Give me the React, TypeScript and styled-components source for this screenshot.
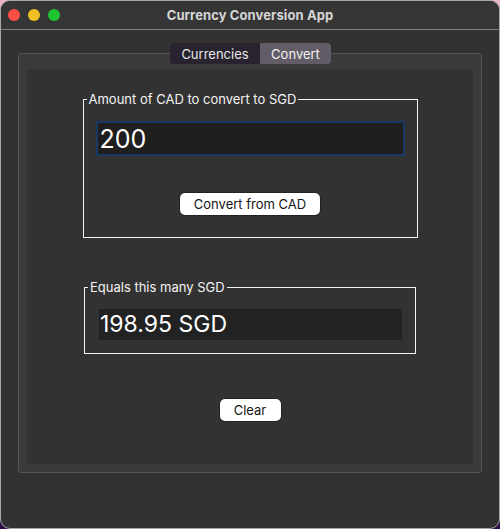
import React from "react";
import styled, { createGlobalStyle } from "styled-components";

const Global = createGlobalStyle`
  html, body {
    margin: 0;
    padding: 0;
    background: linear-gradient(180deg, #e7b7c8 0%, #b07aa8 60%, #2c0b46 100%);
  }
  body {
    font-family: Inter, "Liberation Sans", sans-serif;
  }
`;

const Window = styled.div`
  width: 500px;
  height: 529px;
  box-sizing: border-box;
  border: 1px solid #a8a8a8;
  border-radius: 10px;
  overflow: hidden;
  background: #323232;
  display: flex;
  flex-direction: column;
  font-family: Inter, "Liberation Sans", sans-serif;
`;

const TitleBar = styled.div`
  height: 28px;
  flex: none;
  border-bottom: 1px solid #7c7c7c;
  background: #353535;
  display: grid;
  grid-template-columns: 1fr auto 1fr;
  align-items: center;
  padding-left: 7px;
  padding-right: 7px;
`;

const Lights = styled.div`
  display: flex;
  gap: 8px;
  align-items: center;
`;

const Light = styled.span<{ $color: string }>`
  width: 12px;
  height: 12px;
  border-radius: 50%;
  background: ${(p) => p.$color};
`;

const Title = styled.div`
  font-size: 13px;
  font-weight: 700;
  color: #d6d6d6;
  letter-spacing: 0.1px;
`;

const Content = styled.div`
  padding: 13px 17px 0 17px;
  display: flex;
  flex-direction: column;
  align-items: stretch;
`;

const Tabs = styled.div`
  display: flex;
  justify-content: center;
  position: relative;
  z-index: 1;
  padding-left: 1px;
`;

const Tab = styled.div<{ $active?: boolean; $width: number; $first?: boolean }>`
  width: ${(p) => p.$width}px;
  height: 21px;
  display: flex;
  align-items: center;
  justify-content: center;
  font-size: 13px;
  color: ${(p) => (p.$active ? "#f2f2f2" : "#e6e6e6")};
  background: ${(p) => (p.$active ? "#615c66" : "#28232e")};
  border-radius: ${(p) => (p.$first ? "4px 0 0 4px" : "0 4px 4px 0")};
`;

const Pane = styled.div`
  margin-top: -11px;
  width: 464px;
  height: 420px;
  box-sizing: border-box;
  border: 1px solid #545454;
  border-radius: 3px;
  background: #3a3a3a;
  padding: 16px 8px 8px 8px;
`;

const Inner = styled.div`
  height: 394px;
  background: #323232;
  display: flex;
  flex-direction: column;
  align-items: center;
  padding-top: 22px;
  box-sizing: border-box;
`;

const Group = styled.fieldset<{ $width: number; $pb: number; $mt?: number }>`
  width: ${(p) => p.$width}px;
  box-sizing: border-box;
  margin: ${(p) => p.$mt ?? 0}px 0 0 0;
  padding: 14px 0 ${(p) => p.$pb}px 0;
  border: 1px solid #f2f2f2;
  min-width: 0;
`;

const Legend = styled.legend`
  font-size: 13px;
  line-height: 15px;
  color: #f4f4f4;
  padding: 0 2px;
  margin-left: 3px;
`;

const GroupBody = styled.div<{ $gap?: number }>`
  display: flex;
  flex-direction: column;
  align-items: center;
  gap: ${(p) => p.$gap ?? 0}px;
`;

const AmountInput = styled.input`
  width: 309px;
  height: 35px;
  box-sizing: border-box;
  border: 2px solid #193863;
  background: #1f1f1f;
  color: #ffffff;
  font-family: Inter, "Liberation Sans", sans-serif;
  font-size: 25px;
  padding: 0 2px;
  outline: none;
`;

const Output = styled.div`
  width: 303px;
  height: 31px;
  background: #222222;
  color: #ffffff;
  font-size: 23px;
  line-height: 31px;
  padding-left: 1px;
  box-sizing: border-box;
  margin-left: 1px;
`;

const Button = styled.button<{ $width: number; $mt?: number }>`
  width: ${(p) => p.$width}px;
  height: 22px;
  margin-top: ${(p) => p.$mt ?? 0}px;
  background: #ffffff;
  color: #141414;
  border: none;
  border-radius: 5px;
  box-shadow: 0 0 0 0.5px rgba(0, 0, 0, 0.6);
  font-family: Inter, "Liberation Sans", sans-serif;
  font-size: 13px;
  padding: 0;
  display: flex;
  align-items: center;
  justify-content: center;
`;

export default function App() {
  return (
    <>
      <Global />
      <Window>
        <TitleBar>
          <Lights>
            <Light $color="#fe4f47" />
            <Light $color="#f0c023" />
            <Light $color="#1fc530" />
          </Lights>
          <Title>Currency Conversion App</Title>
          <div />
        </TitleBar>
        <Content>
          <Tabs>
            <Tab $width={90} $first>
              Currencies
            </Tab>
            <Tab $width={71} $active>
              Convert
            </Tab>
          </Tabs>
          <Pane>
            <Inner>
              <Group $width={335} $pb={22}>
                <Legend>Amount of CAD to convert to SGD</Legend>
                <GroupBody $gap={37}>
                  <AmountInput defaultValue="200" />
                  <Button $width={140}>Convert from CAD</Button>
                </GroupBody>
              </Group>
              <Group $width={332} $pb={13} $mt={42}>
                <Legend>Equals this many SGD</Legend>
                <GroupBody>
                  <Output>198.95 SGD</Output>
                </GroupBody>
              </Group>
              <Button $width={61} $mt={45}>
                Clear
              </Button>
            </Inner>
          </Pane>
        </Content>
      </Window>
    </>
  );
}
